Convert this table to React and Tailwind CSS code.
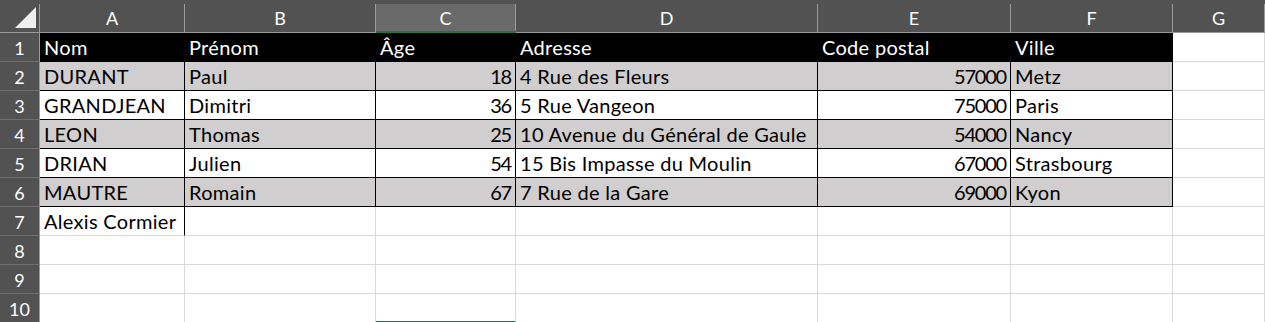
import React from "react";

const COLS = [
  { key: "A", w: "w-[145px]" },
  { key: "B", w: "w-[191px]" },
  { key: "C", w: "w-[140px]" },
  { key: "D", w: "w-[302px]" },
  { key: "E", w: "w-[193px]" },
  { key: "F", w: "w-[162px]" },
  { key: "G", w: "flex-1" },
];

const HEAD = ["Nom", "Prénom", "Âge", "Adresse", "Code postal", "Ville"];

const PEOPLE = [
  ["DURANT", "Paul", 18, "4 Rue des Fleurs", 57000, "Metz"],
  ["GRANDJEAN", "Dimitri", 36, "5 Rue Vangeon", 75000, "Paris"],
  ["LEON", "Thomas", 25, "10 Avenue du Général de Gaule", 54000, "Nancy"],
  ["DRIAN", "Julien", 54, "15 Bis Impasse du Moulin", 67000, "Strasbourg"],
  ["MAUTRE", "Romain", 67, "7 Rue de la Gare", 69000, "Kyon"],
];

const font = { fontFamily: "Lato, 'Open Sans', sans-serif" };

function ColumnHeader({ col, active }) {
  return (
    <div
      className={`${col.w} h-[33px] pt-[4px] ${
        active ? "border-b-2 border-[#217346]" : "border-b border-[#9a9a9a]"
      }`}
    >
      <div
        className={`h-full flex items-center justify-center text-[18px] leading-none text-white border-r border-[#9a9a9a] ${
          active ? "bg-[#6a6a6a]" : ""
        }`}
      >
        {col.key}
      </div>
    </div>
  );
}

function Cell({ col, value, row, index }) {
  const inTable = row >= 1 && row <= 6 && index < 6;
  const isHead = row === 1 && index < 6;
  const numeric = typeof value === "number";

  let bg = "bg-white";
  if (isHead) bg = "bg-black";
  else if (inTable && row % 2 === 0) bg = "bg-[#d0cece]";

  let right = "border-[#dadada]";
  let bottom = "border-b-[#dadada]";
  if (inTable) {
    right = "border-black";
    bottom = "border-b-black";
  }
  if (row === 7 && index === 0) right = "border-black";
  // active cell outline peeking in at the very bottom of column C
  const selected = row === 10 && index === 2;

  return (
    <div
      className={`${col.w} ${bg} border-r ${right} ${
        selected ? "border-b-2 border-b-[#217346]" : `border-b ${bottom}`
      } flex items-end px-[4px] pb-[2px] overflow-visible whitespace-nowrap text-[20px] leading-[24px] ${
        isHead ? "text-white" : "text-black"
      } ${numeric ? "justify-end tracking-[-1.2px]" : "tracking-[0.3px]"}`}
    >
      {value}
    </div>
  );
}

function Row({ n, values }) {
  return (
    <div className="flex h-[29px]">
      <div className="w-[40px] bg-[#525252] border-r border-[#9a9a9a] border-b border-b-[#6e6e6e] flex items-center justify-center pt-[1px] text-[18px] leading-none text-white">
        {n}
      </div>
      {COLS.map((col, i) => (
        <Cell key={col.key} col={col} value={values[i]} row={n} index={i} />
      ))}
    </div>
  );
}

export default function App() {
  const rows = [HEAD, ...PEOPLE, ["Alexis Cormier"], [], [], []];

  return (
    <div className="w-[1265px] h-[322px] overflow-hidden bg-white" style={font}>
      <div className="flex bg-[#525252]">
        <div className="w-[40px] h-[33px] pt-[4px] border-b border-[#9a9a9a]">
          <div className="h-full border-r border-[#9a9a9a] pl-[15px] pt-[3px]">
            <svg width="21" height="21" viewBox="0 0 21 21">
              <polygon points="0,21 21,21 21,0" fill="#efefef" />
            </svg>
          </div>
        </div>
        {COLS.map((col) => (
          <ColumnHeader key={col.key} col={col} active={col.key === "C"} />
        ))}
      </div>
      {rows.map((values, i) => (
        <Row key={i} n={i + 1} values={values} />
      ))}
    </div>
  );
}
